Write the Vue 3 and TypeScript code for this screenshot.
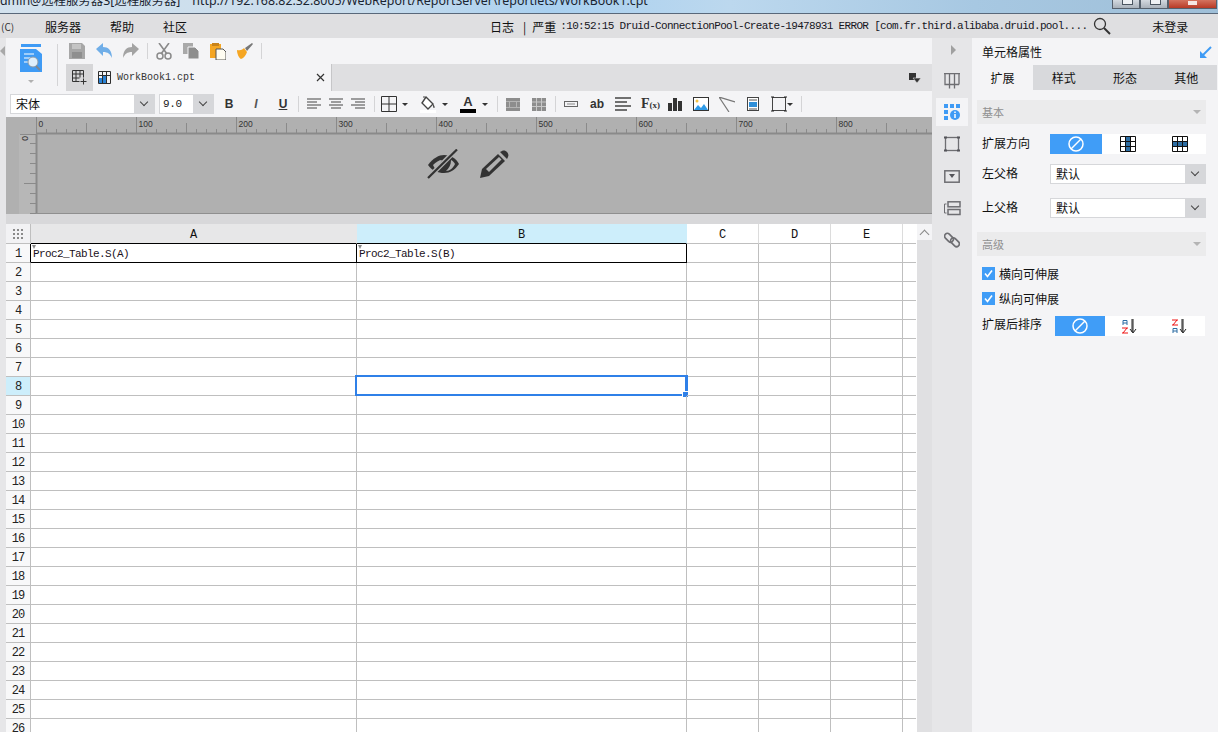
<script setup lang="ts">
const rows = Array.from({ length: 26 }, (_, i) => i + 1)
const cols = ['A', 'B', 'C', 'D', 'E', '']

const rulerX = Array.from({ length: 90 }, (_, i) => i * 10)
const rulerY = Array.from({ length: 8 }, (_, i) => (i + 1) * 10)
const rulerLabels = [0, 100, 200, 300, 400, 500, 600, 700, 800]

const tabs = ['扩展', '样式', '形态', '其他']

const cellText = (row: number, col: string) => {
  if (row === 1 && col === 'A') return 'Proc2_Table.S(A)'
  if (row === 1 && col === 'B') return 'Proc2_Table.S(B)'
  return ''
}
</script>

<template>
  <div class="page">
    <div class="titlebar">
      <span class="title-left">dmin@远程服务器3[远程服务器]</span>
      <span class="title-url">http://192.168.82.32:8005/WebReport/ReportServer\reportlets/WorkBook1.cpt</span>
      <div class="winbtns">
        <i class="winbtn"></i>
        <i class="winbtn"></i>
        <i class="winbtn close"></i>
      </div>
    </div>

    <div class="menubar">
      <span class="menu-c">(C)</span>
      <span class="menu-item m1">服务器</span>
      <span class="menu-item m2">帮助</span>
      <span class="menu-item m3">社区</span>
      <span class="menu-log">日志</span>
      <span class="menu-sep">|</span>
      <span class="menu-sev">严重</span>
      <span class="log">:10:52:15 Druid-ConnectionPool-Create-19478931 ERROR [com.fr.third.alibaba.druid.pool....</span>
      <svg class="search" width="18" height="18" viewBox="0 0 18 18">
        <circle cx="7" cy="7" r="5.5" fill="none" stroke="#333" stroke-width="1.3" />
        <path d="M11 11l6 6" stroke="#333" stroke-width="2" />
      </svg>
      <span class="login">未登录</span>
    </div>

    <div class="body">
      <div class="edge"><i class="edge-arrow"></i></div>

      <div class="main">
        <div class="tools">
          <div class="tpl">
            <svg width="22" height="30" viewBox="0 0 22 30">
              <rect x="1" width="20" height="3" fill="#3f9bf5" />
              <path d="M0 5h16l6 5v18H0z" fill="#3f9bf5" />
              <path d="M4 10h10M4 14h7M4 18h5" stroke="#fff" stroke-width="1" />
              <circle cx="13" cy="18" r="5" fill="#dfeefb" stroke="#8e9aa6" />
              <path d="M16 22l4 4" stroke="#7d8791" stroke-width="2" />
            </svg>
            <i class="tpl-caret"></i>
          </div>
          <div class="tools-right">
            <div class="tool-row">
              <svg class="ic" width="16" height="16" viewBox="0 0 16 16">
                <path d="M0 0h13l3 3v13H0z" fill="#a7a7a7" />
                <rect x="3" y="1" width="9" height="5" fill="#c4c4c4" />
                <rect x="3" y="9" width="10" height="6" fill="#8f8f8f" />
              </svg>
              <svg class="ic" width="16" height="16" viewBox="0 0 16 16">
                <path d="M0 6l7-6v4c5 0 9 3 9 11-2-4-4-6-9-6v4z" fill="#70aee8" />
              </svg>
              <svg class="ic" width="16" height="16" viewBox="0 0 16 16">
                <path d="M16 6L9 0v4C4 4 0 7 0 15c2-4 4-6 9-6v4z" fill="#a3a3a3" />
              </svg>
              <i class="vline short"></i>
              <svg class="ic" width="16" height="17" viewBox="0 0 16 17">
                <path d="M3 0l8 11M13 0L5 11" stroke="#8a8a8a" stroke-width="1.6" />
                <circle cx="4" cy="13" r="3" fill="none" stroke="#8a8a8a" stroke-width="1.5" />
                <circle cx="12" cy="13" r="3" fill="none" stroke="#8a8a8a" stroke-width="1.5" />
              </svg>
              <svg class="ic" width="16" height="16" viewBox="0 0 16 16">
                <rect y="0" width="10" height="11" fill="#a9a9a9" />
                <path d="M5 4h7l4 4v8H5z" fill="#8e8e8e" stroke="#f4f4f6" stroke-width="1" />
              </svg>
              <svg class="ic" width="16" height="17" viewBox="0 0 16 17">
                <rect y="1" width="11" height="14" fill="#f5a623" />
                <rect x="2" width="7" height="3" fill="#c8821a" />
                <path d="M6 6h7l3 3v8H6z" fill="#fffdf2" stroke="#555" stroke-width="1" />
              </svg>
              <svg class="ic" width="16" height="16" viewBox="0 0 16 16">
                <path d="M0 7c4 1 6-1 7-2l3 4c-1 3-3 6-6 7-2-1-4-5-4-9z" fill="#f5a623" />
                <path d="M8 5l7-5 1 1-6 7z" fill="#777" />
              </svg>
              <i class="vline short"></i>
            </div>
            <div class="tabbar">
              <div class="new-tab">
                <svg width="15" height="15" viewBox="0 0 15 15">
                  <path d="M.5 .5h11v7M.5 .5v11h7M4 .5v11M8 .5v7M.5 4h11M.5 8h7" fill="none" stroke="#333" />
                  <path d="M11.5 8.5v6M8.5 11.5h6" stroke="#333" />
                </svg>
              </div>
              <div class="tab">
                <svg width="13" height="13" viewBox="0 0 13 13">
                  <path d="M.5 .5h12v12H.5zM4.5 .5v12M8.5 .5v12M.5 4.5h12" fill="none" stroke="#2d2d2d" />
                  <rect x="1" y="7" width="3" height="5" fill="#2b83d6" />
                  <rect x="5" y="5" width="3" height="7" fill="#2b83d6" />
                </svg>
                <span class="tab-name">WorkBook1.cpt</span>
                <svg class="tab-x" width="9" height="9" viewBox="0 0 9 9">
                  <path d="M1 1l7 7M8 1L1 8" stroke="#333" stroke-width="1.2" />
                </svg>
              </div>
              <div class="tab-end">
                <svg width="12" height="10" viewBox="0 0 12 10">
                  <rect width="7" height="7" fill="#333" />
                  <path d="M4 5h8L8 10z" fill="#333" stroke="#dfdfe1" stroke-width=".6" />
                </svg>
              </div>
            </div>
          </div>
          <i class="vline tall"></i>
        </div>

        <div class="format">
          <div class="fsel font"><span>宋体</span><b class="chev"></b></div>
          <div class="fsel size"><span>9.0</span><b class="chev"></b></div>
          <span class="fb bold">B</span>
          <span class="fb ital">I</span>
          <span class="fb und">U</span>
          <i class="vline fdiv d1"></i>
          <svg v-for="n in 3" :key="n" class="align" width="14" height="12" viewBox="0 0 14 12">
            <path
              :d="n === 1 ? 'M0 1h14M0 4h10M0 7h14M0 10h10' : n === 2 ? 'M0 1h14M2 4h10M0 7h14M2 10h10' : 'M0 1h14M4 4h10M0 7h14M4 10h10'"
              stroke="#444"
            />
          </svg>
          <i class="vline fdiv d2"></i>
          <svg class="bd" width="16" height="16" viewBox="0 0 16 16">
            <path d="M.5 .5h15v15H.5zM8 .5v15M.5 8h15" fill="none" stroke="#333" />
          </svg>
          <i class="caret c1"></i>
          <svg class="fill" width="16" height="17" viewBox="0 0 16 17">
            <path d="M6 1l7 7-5 5-6-6z" fill="#fff" stroke="#444" stroke-width="1.4" />
            <path d="M4 2V0" stroke="#444" />
            <path d="M13 8c2 2 2 4 1 4s-1-2-1-4z" fill="#444" />
            <rect y="14" width="16" height="3" fill="#fff" />
          </svg>
          <i class="caret c2"></i>
          <div class="fcolor"><span>A</span><i></i></div>
          <i class="caret c3"></i>
          <i class="vline fdiv d3"></i>
          <svg class="merge" width="14" height="13" viewBox="0 0 14 13">
            <rect width="14" height="13" fill="#8d8d8d" />
            <path d="M0 3.500h14M0 9.500h14M3.500 3.500v6M10.500 3.500v6" stroke="#b4b4b4" />
          </svg>
          <svg class="merge m2" width="14" height="13" viewBox="0 0 14 13">
            <rect width="14" height="13" fill="#8d8d8d" />
            <path d="M0 4h14M0 8.500h14M4.500 0v13M9.500 0v13" stroke="#c8c8c8" />
          </svg>
          <i class="vline fdiv d4"></i>
          <svg class="w1" width="14" height="6" viewBox="0 0 14 6">
            <rect x=".5" y=".5" width="13" height="5" fill="none" stroke="#666" />
            <path d="M3 3h8" stroke="#888" />
          </svg>
          <span class="ab">ab</span>
          <svg class="w2" width="16" height="14" viewBox="0 0 16 14">
            <path d="M0 1h16M0 5h12M0 9h16M0 13h12" stroke="#444" stroke-width="1.6" />
          </svg>
          <span class="fx">F<small>(x)</small></span>
          <svg class="w3" width="14" height="13" viewBox="0 0 14 13">
            <rect y="5" width="4" height="8" fill="#333" />
            <rect x="5" width="4" height="13" fill="#333" />
            <rect x="10" y="3" width="4" height="10" fill="#333" />
          </svg>
          <svg class="w4" width="16" height="14" viewBox="0 0 16 14">
            <rect x=".5" y=".5" width="15" height="13" fill="#fff" stroke="#333" />
            <circle cx="4" cy="4" r="1.500" fill="#f5c242" />
            <path d="M1 13l4-5 3 3 3-4 4 6z" fill="#2f9be8" />
          </svg>
          <svg class="w5" width="16" height="15" viewBox="0 0 16 15">
            <path d="M0 0l16 5M0 0l10 15" stroke="#777" stroke-width="1.200" fill="none" />
          </svg>
          <svg class="w6" width="12" height="14" viewBox="0 0 12 14">
            <rect x=".5" y=".5" width="11" height="13" fill="#fff" stroke="#444" />
            <path d="M2 3h8" stroke="#555" />
            <rect x="2" y="5" width="8" height="5" fill="#2f8fd8" />
            <path d="M2 12h8" stroke="#555" />
          </svg>
          <svg class="w7" width="16" height="16" viewBox="0 0 16 16">
            <rect x="1.500" y="1.500" width="13" height="13" fill="none" stroke="#444" />
            <path d="M0 1h3M13 1h3M0 15h3M13 15h3" stroke="#222" />
          </svg>
          <i class="caret c4"></i>
          <i class="vline fdiv d5"></i>
        </div>

        <div class="canvas">
          <svg class="ruler" width="926" height="97" viewBox="6 117 926 97">
            <rect x="19" y="134" width="17" height="80" fill="#b7b7b7" />
            <g v-for="x in rulerX" :key="x">
              <path
                :d="`M${36.5 + x} ${x % 100 === 0 ? 117 : x % 50 === 0 ? 123 : 129}V134`"
                stroke="#8a8a8a"
              />
            </g>
            <path d="M36 133.500H932" stroke="#8a8a8a" stroke-width="2" />
            <path d="M36.500 134V214" stroke="#8a8a8a" stroke-width="2" />
            <path d="M36 213.500H932" stroke="#8f8f8f" stroke-width="1" />
            <path
              v-for="y in rulerY"
              :key="y"
              :d="`M${y === 50 ? 24 : 30} ${133.5 + y}H36`"
              stroke="#8a8a8a"
            />
            <path d="M20 134.500H36" stroke="#8a8a8a" />
            <text
              v-for="l in rulerLabels"
              :key="l"
              :x="38.500 + l"
              y="127"
              class="rtext"
            >{{ l }}</text>
            <text x="0" y="0" class="rtext" transform="translate(22 136) rotate(90)">0</text>
          </svg>
          <div class="canvas-icons">
            <svg width="33" height="30" viewBox="0 0 33 30">
              <path d="M1 16C6 9 12 6 17 6c6 0 12 3 15 9-4 6-9 9-15 9S5 22 1 16z" fill="#333" />
              <path d="M6 16c3-3 6-5 9-5l-5 10c-2-1-3-3-4-5z" fill="#b0b0b0" />
              <path d="M19 22c4 0 7-3 9-7-1-2-2-3-4-4 0 5-2 8-5 11z" fill="#b0b0b0" />
              <path d="M1 29L29 1" stroke="#b0b0b0" stroke-width="5" />
              <path d="M1 29L30 .5" stroke="#333" stroke-width="2.200" />
            </svg>
            <svg width="31" height="30" viewBox="0 0 31 30">
              <path d="M1 29l2-9L19 5l7 7L10 27z" fill="#333" />
              <path d="M21 3l2-1c2-1 4 0 5 1s2 3 1 5l-1 2z" fill="#333" />
              <path d="M7 20L20 8l2.500 2.500L10 23z" fill="#b0b0b0" />
            </svg>
          </div>
        </div>

        <div class="gap-band"></div>

        <div class="sheet">
          <div class="grid">
            <div class="row head">
              <div class="corner"><i class="dots"></i></div>
              <div
                v-for="c in cols"
                :key="c"
                class="hcell"
                :class="['col-' + (c || 'F').toLowerCase(), { sel: c === 'B' }]"
              >{{ c }}</div>
            </div>
            <div v-for="r in rows" :key="r" class="row">
              <div class="rnum" :class="{ sel: r === 8, first: r === 1 }">{{ r }}</div>
              <div
                v-for="c in cols"
                :key="c"
                class="cell"
                :class="['col-' + (c || 'F').toLowerCase(), { bound: r === 1 && (c === 'A' || c === 'B') }]"
              >
                <template v-if="cellText(r, c)">
                  <i class="down"></i>{{ cellText(r, c) }}
                </template>
                <div v-if="r === 8 && c === 'B'" class="selection"><i></i></div>
              </div>
            </div>
          </div>
          <div class="scroll">
            <div class="scroll-up"><i></i></div>
          </div>
        </div>
      </div>

      <div class="strip">
        <i class="strip-arrow"></i>
        <svg class="s1" width="16" height="16" viewBox="0 0 16 16">
          <path d="M0 .5h16M1 .5v11h14M5.500 .5v15M10.500 .5v15M1 11.500h14M15 .5v11" fill="none" stroke="#6e6e72" stroke-width="1.300" />
        </svg>
        <div class="s-active">
          <svg width="16" height="16" viewBox="0 0 16 16">
            <rect width="4" height="4" fill="#3f9bf5" />
            <rect x="6" width="4" height="4" fill="#3f9bf5" />
            <rect x="12" width="4" height="4" fill="#3f9bf5" />
            <rect y="6" width="4" height="4" fill="#3f9bf5" />
            <rect y="12" width="4" height="4" fill="#3f9bf5" />
            <circle cx="11" cy="11" r="5" fill="#3f9bf5" />
            <path d="M11 10v4M11 7.500v1.500" stroke="#fff" stroke-width="1.500" />
          </svg>
        </div>
        <svg class="s2" width="16" height="16" viewBox="0 0 16 16">
          <rect x="1.500" y="1.500" width="13" height="13" fill="none" stroke="#6e6e72" stroke-width="1.300" />
          <path d="M0 1.500h3M13 1.500h3M0 14.500h3M13 14.500h3" stroke="#55555a" stroke-width="2" />
        </svg>
        <svg class="s3" width="16" height="13" viewBox="0 0 16 13">
          <rect x=".8" y=".8" width="14.400" height="11.400" fill="none" stroke="#6e6e72" stroke-width="1.500" />
          <path d="M5 4h6L8 8z" fill="#55555a" />
        </svg>
        <svg class="s4" width="17" height="15" viewBox="0 0 17 15">
          <rect x="4" y=".8" width="12" height="5" fill="none" stroke="#6e6e72" stroke-width="1.500" />
          <rect x="4" y="8.500" width="12" height="5" fill="none" stroke="#6e6e72" stroke-width="1.500" />
          <path d="M2.500 3H.5v9h2" fill="none" stroke="#6e6e72" />
        </svg>
        <svg class="s5" width="16" height="16" viewBox="0 0 16 16">
          <rect x="0" y="3" width="10" height="5.500" rx="2.700" fill="none" stroke="#6e6e72" stroke-width="1.700" transform="rotate(45 5 5.700)" />
          <rect x="6" y="7.500" width="10" height="5.500" rx="2.700" fill="none" stroke="#6e6e72" stroke-width="1.700" transform="rotate(45 11 10.200)" />
        </svg>
      </div>

      <div class="panel">
        <div class="panel-title">
          <span>单元格属性</span>
          <svg width="12" height="12" viewBox="0 0 12 12">
            <path d="M11 1L2 10" stroke="#3f9bf5" stroke-width="2" />
            <path d="M0 5v7h7z" fill="#3f9bf5" />
          </svg>
        </div>
        <div class="ptabs">
          <div v-for="(t, i) in tabs" :key="t" class="ptab" :class="{ on: i === 0 }">{{ t }}</div>
        </div>
        <div class="section"><span>基本</span><i class="sec-caret"></i></div>
        <div class="prow first">
          <label>扩展方向</label>
          <div class="seg">
            <div class="seg-item on">
              <svg width="16" height="16" viewBox="0 0 16 16">
                <circle cx="8" cy="8" r="7" fill="none" stroke="#fff" stroke-width="1.500" />
                <path d="M3 13L13 3" stroke="#fff" stroke-width="1.500" />
              </svg>
            </div>
            <div class="seg-item">
              <svg width="16" height="16" viewBox="0 0 16 16">
                <rect x="5" y="0" width="6" height="16" fill="#2c6da3" />
                <path d="M.5 .5h15v15H.5zM5.500 .5v15M10.500 .5v15M.5 5.500h15M.5 10.500h15" fill="none" stroke="#111" />
              </svg>
            </div>
            <div class="seg-item">
              <svg width="16" height="16" viewBox="0 0 16 16">
                <rect x="0" y="5" width="16" height="6" fill="#2c6da3" />
                <path d="M.5 .5h15v15H.5zM5.500 .5v15M10.500 .5v15M.5 5.500h15M.5 10.500h15" fill="none" stroke="#111" />
              </svg>
            </div>
          </div>
        </div>
        <div class="prow sel1">
          <label>左父格</label>
          <div class="fsel wide"><span>默认</span><b class="chev"></b></div>
        </div>
        <div class="prow sel2">
          <label>上父格</label>
          <div class="fsel wide"><span>默认</span><b class="chev"></b></div>
        </div>
        <div class="section adv"><span>高级</span><i class="sec-caret"></i></div>
        <div class="check c-a"><i class="box">
          <svg width="13" height="13" viewBox="0 0 13 13"><path d="M3 6.500l2.500 3L10 3.500" fill="none" stroke="#fff" stroke-width="1.600" /></svg>
        </i>横向可伸展</div>
        <div class="check c-b"><i class="box">
          <svg width="13" height="13" viewBox="0 0 13 13"><path d="M3 6.500l2.500 3L10 3.500" fill="none" stroke="#fff" stroke-width="1.600" /></svg>
        </i>纵向可伸展</div>
        <div class="prow sort">
          <label>扩展后排序</label>
          <div class="seg narrow">
            <div class="seg-item on">
              <svg width="16" height="16" viewBox="0 0 16 16">
                <circle cx="8" cy="8" r="7" fill="none" stroke="#fff" stroke-width="1.500" />
                <path d="M3 13L13 3" stroke="#fff" stroke-width="1.500" />
              </svg>
            </div>
            <div class="seg-item">
              <svg width="16" height="15" viewBox="0 0 16 15">
                <path d="M1 6V1.500h4V6M1 4h4" fill="none" stroke="#2c6da3" />
                <path d="M0 9h6M5 9L1 14M0 14h6" fill="none" stroke="#e11" />
                <path d="M11 0v13M10 0v13M8 10l3 4 3-4" fill="none" stroke="#222" />
              </svg>
            </div>
            <div class="seg-item">
              <svg width="16" height="15" viewBox="0 0 16 15">
                <path d="M0 1h6M5 1L1 6M0 6h6" fill="none" stroke="#e11" />
                <path d="M1 14V9.500h4V14M1 12h4" fill="none" stroke="#2c6da3" />
                <path d="M11 0v13M10 0v13M8 10l3 4 3-4" fill="none" stroke="#222" />
              </svg>
            </div>
          </div>
        </div>
      </div>
    </div>
  </div>
</template>

<style>
html,
body {
  margin: 0;
  overflow: hidden;
  background: #f4f4f6;
}
</style>

<style scoped>
.page {
  width: 1218px;
  height: 732px;
  overflow: hidden;
  display: flex;
  flex-direction: column;
  font-family: "Noto Sans CJK SC", "Liberation Sans", sans-serif;
  font-size: 12px;
  color: #111;
}

i {
  display: block;
  font-style: normal;
}

.titlebar {
  height: 13px;
  flex: none;
  position: relative;
  overflow: hidden;
  border-bottom: 1px solid #59687a;
  background: linear-gradient(90deg, #d3e2ee 0, #c8dcec 30%, #a9d0f0 45%, #bcd8ee 60%, #a7c8e2 80%, #9fbfd8 100%);
  font-family: "Noto Sans", "Noto Sans CJK SC", sans-serif;
  font-size: 12.4px;
  line-height: 13px;
  white-space: nowrap;
  color: #1a2430;
}

.title-left,
.title-url {
  display: inline-block;
  position: relative;
  top: -6px;
}

.title-url {
  margin-left: 12px;
}

.winbtns {
  position: absolute;
  right: 1px;
  top: -1px;
  display: flex;
  height: 10px;
}

.winbtn {
  width: 28px;
  height: 10px;
  border: 1px solid #55606c;
  border-top: 0;
  background: linear-gradient(#d8dee4, #a9b1ba);
  box-sizing: border-box;
  position: relative;
}

.winbtn::after {
  content: "";
  position: absolute;
  left: 9px;
  top: 1px;
  width: 9px;
  height: 4px;
  background: #eef1f4;
  border: 1px solid #4a5560;
  border-top: 0;
}

.winbtn.close {
  width: 49px;
  background: linear-gradient(#d87a66, #b83a26);
}

.winbtn.close::after {
  left: 19px;
  top: 2px;
  background: #f6e6e2;
  border: 0;
}

.menubar {
  height: 24px;
  flex: none;
  display: flex;
  align-items: center;
  background: #dfdfe1;
  white-space: nowrap;
  font-size: 12px;
}

.menu-c {
  margin-left: 1px;
  font-size: 10px;
  width: 44px;
  color: #333;
}

.m2 {
  margin-left: 29px;
}

.m3 {
  margin-left: 29px;
}

.menu-log {
  margin-left: 303px;
}

.menu-sep {
  margin-left: 9px;
}

.menu-sev {
  margin-left: 6px;
}

.log {
  font-family: "Liberation Mono", monospace;
  font-size: 11px;
  letter-spacing: -0.68px;
  width: 533px;
  margin-left: 4px;
  color: #16161e;
}

.search {
  margin-left: 0;
}

.login {
  margin-left: 41px;
}

.body {
  flex: 1;
  display: flex;
  min-height: 0;
}

.edge {
  width: 6px;
  flex: none;
  background: #e6e6e8;
  position: relative;
}

.edge-arrow {
  position: absolute;
  top: 8px;
  left: 0;
  border: 5px solid transparent;
  border-left: 0;
  border-right-color: #a8a8a8;
}

.main {
  width: 926px;
  flex: none;
  display: flex;
  flex-direction: column;
  min-width: 0;
}

.tools {
  height: 53px;
  flex: none;
  display: flex;
  background: #f4f4f6;
  position: relative;
}

.tpl {
  width: 60px;
  flex: none;
  padding: 6px 0 0 14px;
  box-sizing: border-box;
}

.tpl svg {
  display: block;
}

.tpl-caret {
  margin: 6px 0 0 8px;
  width: 0;
  border: 3px solid transparent;
  border-top: 3px solid #b0b0b0;
  border-bottom: 0;
}

.vline {
  flex: none;
  width: 1px;
  background: #d4d4d6;
}

.vline.tall {
  position: absolute;
  left: 51px;
  top: 6px;
  height: 42px;
}

.vline.short {
  height: 16px;
  margin: 0 8px 0 -3px;
}

.tools-right {
  flex: 1;
  min-width: 0;
  display: flex;
  flex-direction: column;
}

.tool-row {
  height: 26px;
  display: flex;
  align-items: center;
  padding-left: 3px;
}

.ic {
  margin-right: 11px;
  flex: none;
}

.tabbar {
  height: 27px;
  display: flex;
  background: #dfdfe1;
}

.new-tab {
  width: 27px;
  background: #d6d6d8;
  display: flex;
  align-items: center;
  justify-content: center;
}

.tab {
  width: 239px;
  box-sizing: border-box;
  display: flex;
  align-items: center;
  padding-left: 5px;
  background: #f4f4f6;
  border-right: 1px solid #c6c6c8;
}

.tab-name {
  font-family: "Liberation Mono", monospace;
  font-size: 10px;
  color: #333;
  margin-left: 6px;
  flex: 1;
}

.tab-x {
  margin-right: 6px;
}

.tab-end {
  flex: 1;
  display: flex;
  align-items: center;
  justify-content: flex-end;
  padding-right: 11px;
}

.format {
  height: 26px;
  flex: none;
  display: flex;
  align-items: center;
  background: #f4f4f6;
}

.fsel {
  height: 20px;
  display: flex;
  box-sizing: border-box;
  background: #fff;
  border: 1px solid #d6d7da;
  flex: none;
}

.fsel span {
  flex: 1;
  padding-left: 5px;
  line-height: 18px;
  font-size: 12px;
}

.font {
  width: 145px;
  margin-left: 4px;
}

.size {
  width: 55px;
  margin-left: 4px;
}

.size span {
  font-family: "Liberation Mono", monospace;
  font-size: 11px;
  letter-spacing: -0.4px;
  padding-left: 3px;
  color: #222;
}

.chev {
  width: 20px;
  flex: none;
  background: #d6d7da;
  position: relative;
}

.chev::after {
  content: "";
  position: absolute;
  left: 7px;
  top: 4px;
  width: 5px;
  height: 5px;
  border-right: 1px solid #444;
  border-bottom: 1px solid #444;
  transform: rotate(45deg);
}

.fb {
  font-family: "Liberation Sans", sans-serif;
  font-size: 12px;
  width: 12px;
  text-align: center;
  flex: none;
  color: #333;
}

.bold {
  font-weight: 700;
  margin-left: 9px;
}

.ital {
  font-style: italic;
  font-weight: 700;
  margin-left: 15px;
  color: #555;
}

.und {
  text-decoration: underline;
  font-weight: 700;
  margin-left: 15px;
}

.fdiv {
  height: 16px;
}

.d1 {
  margin: 0 8px 0 9px;
}

.align {
  flex: none;
  margin-right: 8px;
}

.d2 {
  margin-left: 1px;
  margin-right: 6px;
}

.bd {
  flex: none;
}

.caret {
  flex: none;
  width: 0;
  border: 3px solid transparent;
  border-top: 3px solid #333;
  border-bottom: 0;
}

.c1 {
  margin-left: 5px;
}

.fill {
  margin-left: 12px;
  flex: none;
}

.c2 {
  margin-left: 6px;
}

.fcolor {
  margin-left: 12px;
  width: 16px;
  flex: none;
  text-align: center;
  font-family: "Liberation Sans", sans-serif;
  font-weight: 700;
  font-size: 13px;
  line-height: 12px;
  color: #333;
}

.fcolor i {
  height: 4px;
  background: #000;
  margin-top: 1px;
}

.c3 {
  margin-left: 6px;
}

.d3 {
  margin-left: 9px;
  margin-right: 8px;
}

.merge {
  flex: none;
}

.merge.m2 {
  margin-left: 12px;
}

.d4 {
  margin-left: 9px;
  margin-right: 8px;
}

.w1 {
  flex: none;
}

.ab {
  margin-left: 12px;
  width: 14px;
  flex: none;
  font-family: "Liberation Sans", sans-serif;
  font-weight: 700;
  font-size: 12px;
  color: #333;
}

.w2 {
  margin-left: 11px;
  flex: none;
}

.fx {
  margin-left: 10px;
  width: 16px;
  flex: none;
  font-family: "Liberation Serif", serif;
  font-weight: 700;
  font-size: 14px;
  color: #333;
  white-space: nowrap;
}

.fx small {
  font-size: 9px;
}

.w3 {
  margin-left: 11px;
  flex: none;
}

.w4 {
  margin-left: 11px;
  flex: none;
}

.w5 {
  margin-left: 10px;
  flex: none;
}

.w6 {
  margin-left: 12px;
  flex: none;
}

.w7 {
  margin-left: 12px;
  flex: none;
}

.c4 {
  margin-left: 0;
}

.d5 {
  margin-left: 8px;
}

.canvas {
  height: 97px;
  flex: none;
  background: #b0b0b0;
  position: relative;
  overflow: hidden;
}

.ruler {
  display: block;
}

.rtext {
  font-family: "Liberation Sans", sans-serif;
  font-size: 8.5px;
  fill: #333;
}

.canvas-icons {
  position: absolute;
  left: 421px;
  top: 32px;
  display: flex;
  gap: 19px;
}

.gap-band {
  height: 10px;
  flex: none;
  background: #d8d8da;
}

.sheet {
  flex: 1;
  min-height: 0;
  display: flex;
  background: #fff;
  overflow: hidden;
}

.grid {
  width: 910px;
  flex: none;
}

.row {
  display: flex;
  height: 19px;
}

.row.head {
  height: 20px;
}

.corner {
  width: 25px;
  box-sizing: border-box;
  background: #f2f2f4;
  border-right: 1px solid #bfbfbf;
  border-bottom: 1px solid #bfbfbf;
  display: flex;
  align-items: center;
  justify-content: center;
}

.dots {
  width: 12px;
  height: 12px;
  background-image: radial-gradient(#8a8a8a 1.2px, transparent 1.5px);
  background-size: 4px 4px;
}

.hcell,
.cell,
.rnum {
  box-sizing: border-box;
  flex: none;
  border-right: 1px solid #bfbfbf;
  border-bottom: 1px solid #bfbfbf;
}

.hcell {
  height: 20px;
  text-align: center;
  line-height: 22px;
  font-family: "Liberation Mono", monospace;
  font-size: 12px;
  background: #fff;
  border-right-color: #dcdcdc;
}

.hcell.col-a {
  background: #e7e7e8;
  border-bottom-color: #000;
  border-right-color: #e7e7e8;
}

.hcell.col-b {
  background: #cdeefb;
  border-bottom-color: #000;
  border-right-color: #cdeefb;
}

.rnum {
  width: 25px;
  height: 19px;
  text-align: center;
  background: #f8f8f9;
  line-height: 20px;
  font-family: "Liberation Mono", monospace;
  font-size: 12px;
  letter-spacing: -1px;
  color: #222;
}

.rnum.first {
  border-right-color: #000;
}

.rnum.sel {
  background: #cdeefb;
}

.col-a {
  width: 326px;
}

.col-b {
  width: 330px;
}

.col-c,
.col-d,
.col-e {
  width: 72px;
}

.col-f {
  width: 13px;
  border-right: 0;
}

.cell {
  height: 19px;
  position: relative;
  font-family: "Liberation Mono", monospace;
  font-size: 11px;
  letter-spacing: -0.6px;
  line-height: 21px;
  padding-left: 2px;
  color: #1a1020;
  white-space: nowrap;
}

.cell.bound {
  border-right-color: #000;
  border-bottom-color: #000;
}

.down {
  position: absolute;
  left: 1px;
  top: 1px;
  border: 2px solid transparent;
  border-top: 4px solid #8a8a8a;
  border-bottom: 0;
}

.selection {
  position: absolute;
  left: -2px;
  top: -2px;
  width: 333px;
  height: 21px;
  box-sizing: border-box;
  border: 2px solid #2f80e8;
  border-right-width: 3px;
}

.selection i {
  position: absolute;
  right: -4px;
  bottom: -4px;
  width: 5px;
  height: 5px;
  background: #2f80e8;
  border: 1px solid #fff;
}

.scroll {
  width: 16px;
  flex: none;
  background: #e0e0e2;
  border-left: 1px solid #fff;
  box-sizing: border-box;
}

.scroll-up {
  height: 16px;
  background: #f4f4f6;
  position: relative;
}

.scroll-up i {
  position: absolute;
  left: 4px;
  top: 7px;
  width: 6px;
  height: 6px;
  border-left: 1px solid #888;
  border-top: 1px solid #888;
  transform: rotate(45deg);
}

.strip {
  width: 40px;
  flex: none;
  background: #e6e6e8;
  display: flex;
  flex-direction: column;
  align-items: center;
  position: relative;
}

.strip-arrow {
  margin-top: 7px;
  margin-left: 2px;
  border: 5px solid transparent;
  border-right: 0;
  border-left: 5px solid #a0a0a0;
  width: 0;
}

.s1 {
  margin-top: 18px;
}

.s-active {
  margin-top: 9px;
  width: 32px;
  height: 28px;
  background: #f4f4f6;
  display: flex;
  align-items: center;
  justify-content: center;
}

.s2 {
  margin-top: 10px;
}

.s3 {
  margin-top: 18px;
}

.s4 {
  margin-top: 18px;
}

.s5 {
  margin-top: 16px;
}

.panel {
  width: 246px;
  flex: none;
  background: #f4f4f6;
}

.panel-title {
  height: 27px;
  display: flex;
  align-items: center;
  justify-content: space-between;
  padding: 0 6px 0 10px;
  font-size: 12px;
}

.ptabs {
  display: flex;
  height: 25px;
  background: #d8d9dc;
  margin-right: 1px;
}

.ptab {
  flex: 1;
  text-align: center;
  line-height: 26px;
  font-size: 12px;
}

.ptab.on {
  background: #f4f4f6;
}

.section {
  margin: 10px 12px 0 5px;
  height: 24px;
  background: #ebebec;
  display: flex;
  align-items: center;
  justify-content: space-between;
  padding: 0 5px;
  font-size: 11px;
  color: #909090;
}

.section.adv {
  margin-top: 14px;
}

.sec-caret {
  width: 0;
  border: 4px solid transparent;
  border-top: 4px solid #b4b4b4;
  border-bottom: 0;
}

.prow {
  display: flex;
  align-items: center;
  margin-left: 10px;
  height: 20px;
}

.prow label {
  flex: none;
  width: 68px;
  font-size: 12px;
  margin-bottom: 4px;
}

.prow.first {
  margin-top: 10px;
}

.prow.sel1 {
  margin-top: 10px;
}

.prow.sel2 {
  margin-top: 14px;
}

.prow.sort {
  margin-top: 10px;
}

.prow.sort label {
  width: 73px;
  margin-bottom: 6px;
}

.seg {
  display: flex;
  width: 156px;
  height: 20px;
  background: #fff;
}

.seg.narrow {
  width: 150px;
}

.seg-item {
  flex: 1;
  display: flex;
  align-items: center;
  justify-content: center;
}

.seg-item.on {
  background: #409df7;
}

.fsel.wide {
  width: 156px;
}

.check {
  display: flex;
  align-items: center;
  margin: 10px 0 0 10px;
  height: 15px;
  font-size: 12px;
}

.check.c-b {
  margin-top: 10px;
}

.box {
  width: 13px;
  height: 13px;
  background: #409df7;
  margin-right: 4px;
}

.box svg {
  display: block;
}
</style>
